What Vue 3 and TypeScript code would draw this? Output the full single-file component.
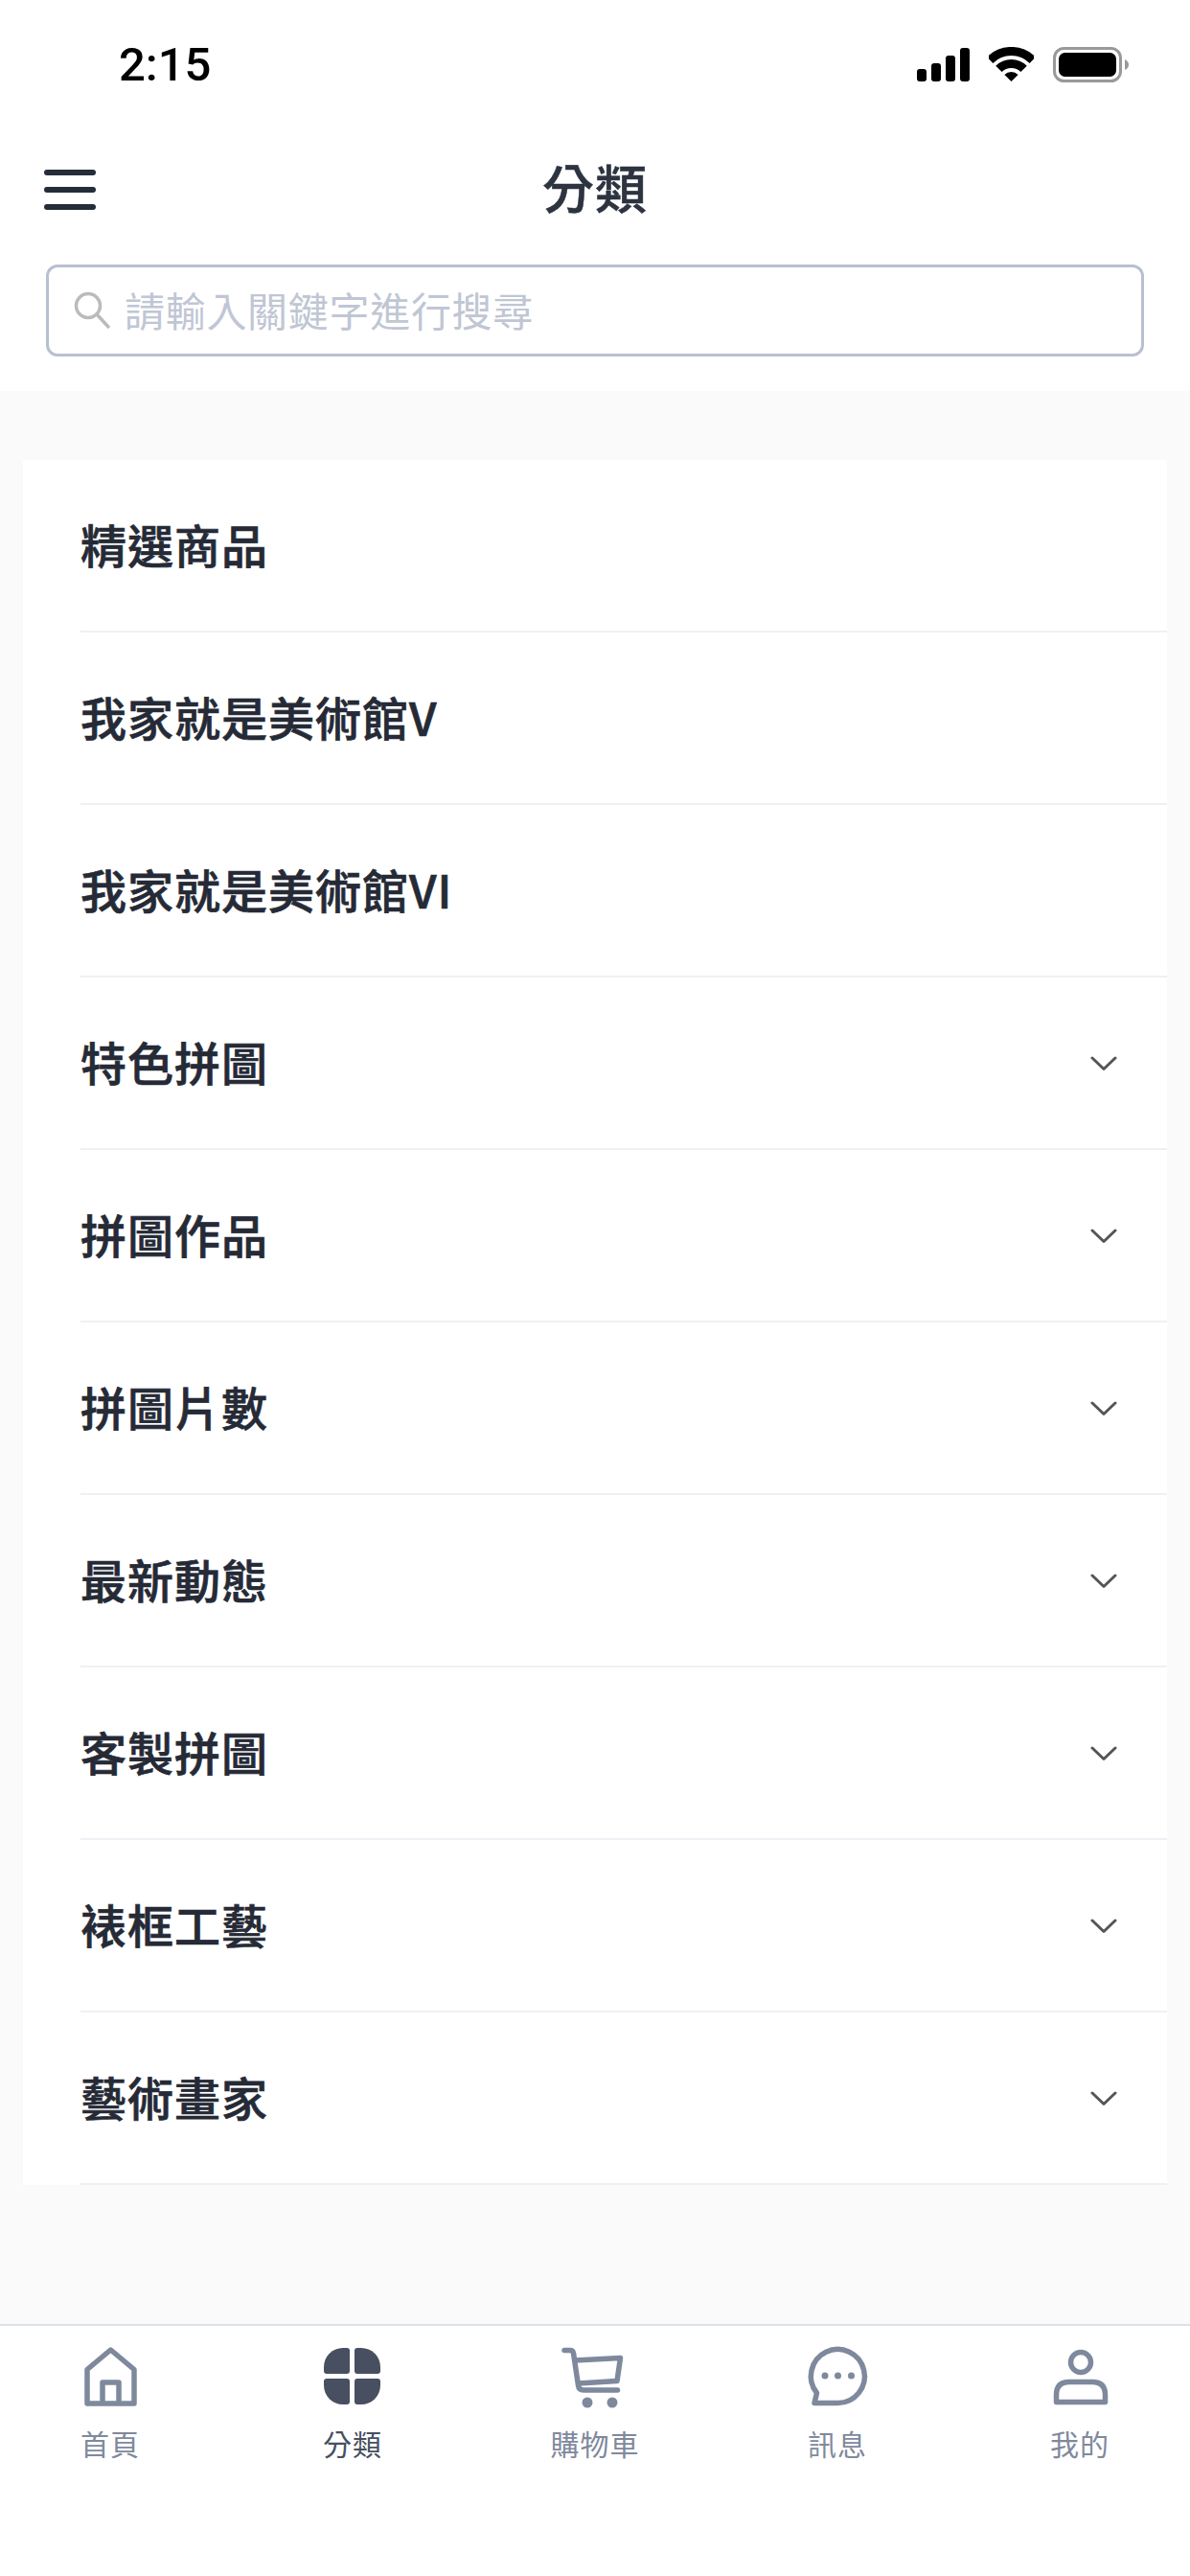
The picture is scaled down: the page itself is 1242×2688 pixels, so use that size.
<script setup lang="ts">
const categories = [
  { name: '精選商品', more: false },
  { name: '我家就是美術館V', more: false },
  { name: '我家就是美術館VI', more: false },
  { name: '特色拼圖', more: true },
  { name: '拼圖作品', more: true },
  { name: '拼圖片數', more: true },
  { name: '最新動態', more: true },
  { name: '客製拼圖', more: true },
  { name: '裱框工藝', more: true },
  { name: '藝術畫家', more: true },
]
</script>

<template>
  <div class="page">
    <div class="status">
      <span class="time">2:15</span>
      <div class="status-icons">
        <svg width="55" height="35" viewBox="0 0 55 35" class="signal">
          <rect x="0" y="22" width="10" height="13" rx="3" />
          <rect x="15" y="16" width="10" height="19" rx="3" />
          <rect x="30" y="8" width="10" height="27" rx="3" />
          <rect x="45" y="0" width="10" height="35" rx="3" />
        </svg>
        <svg width="47" height="36" viewBox="0 0 47 36" class="wifi">
          <path d="M1.2 13.7A31.5 31.5 0 0 1 45.8 13.7" fill="none" stroke="#000" stroke-width="9" />
          <path d="M10.4 22.9A18.5 18.5 0 0 1 36.6 22.9" fill="none" stroke="#000" stroke-width="9" />
          <path d="M23.5 36L16.4 28.9A10 10 0 0 1 30.6 28.9Z" />
        </svg>
        <svg width="79" height="37" viewBox="0 0 79 37" class="battery">
          <rect x="1.5" y="1.5" width="69" height="34" rx="10" fill="none" stroke="#999" stroke-width="3" />
          <rect x="6" y="6" width="60" height="25" rx="6.5" />
          <path d="M75 13Q79 15 79 18.5Q79 22 75 24Z" fill="#999" />
        </svg>
      </div>
    </div>

    <header class="nav">
      <button class="menu" aria-label="menu">
        <span></span>
        <span></span>
        <span></span>
      </button>
      <h1 class="title">分類</h1>
    </header>

    <div class="search-wrap">
      <div class="search">
        <svg width="40" height="40" viewBox="0 0 40 40" fill="none" stroke="#bbb" stroke-width="3.5">
          <circle cx="15" cy="15" r="12.5" />
          <path d="M24 24L36 37" stroke-linecap="round" />
        </svg>
        <span class="placeholder">請輸入關鍵字進行搜尋</span>
      </div>
    </div>

    <main class="content">
      <ul class="list">
        <li v-for="cat in categories" :key="cat.name" class="row">
          <span class="row-name">{{ cat.name }}</span>
          <svg v-if="cat.more" class="chevron" width="28" height="16" viewBox="0 0 28 16" fill="none">
            <path d="M2 2L14 13.5L26 2" stroke="#555" stroke-width="3" stroke-linecap="round" stroke-linejoin="round" />
          </svg>
        </li>
      </ul>
    </main>

    <nav class="tabs">
      <div class="tab">
        <svg width="70" height="70" viewBox="0 0 70 70" fill="none" stroke="#7f899d" stroke-width="5.5" stroke-linejoin="round">
          <path d="M11 27.5L35.5 7L60 27.5V63H11Z" />
          <path d="M27 63V41H44V63" />
        </svg>
        <span>首頁</span>
      </div>
      <div class="tab active">
        <svg width="70" height="70" viewBox="0 0 70 70" fill="#474f60">
          <path d="M29 5Q32 5 32 8V29Q32 32 29 32H8Q5 32 5 29V25A20 20 0 0 1 25 5Z" />
          <path d="M29 5Q32 5 32 8V29Q32 32 29 32H8Q5 32 5 29V25A20 20 0 0 1 25 5Z" transform="matrix(-1 0 0 1 69 0)" />
          <path d="M29 5Q32 5 32 8V29Q32 32 29 32H8Q5 32 5 29V25A20 20 0 0 1 25 5Z" transform="matrix(1 0 0 -1 0 69)" />
          <path d="M29 5Q32 5 32 8V29Q32 32 29 32H8Q5 32 5 29V25A20 20 0 0 1 25 5Z" transform="matrix(-1 0 0 -1 69 69)" />
        </svg>
        <span>分類</span>
      </div>
      <div class="tab">
        <svg width="70" height="70" viewBox="0 0 70 70" fill="none" stroke="#7f899d" stroke-width="5.5" stroke-linejoin="round" stroke-linecap="round">
          <path d="M3 7.5H9Q12 7.5 12.5 10.5L17.5 44Q18 49 23 49H58.5" />
          <path d="M14 18L61.5 15.5L58 39.5L18 42" />
          <circle cx="27" cy="62" r="5.5" fill="#7f899d" stroke="none" />
          <circle cx="53" cy="62" r="5.5" fill="#7f899d" stroke="none" />
        </svg>
        <span>購物車</span>
      </div>
      <div class="tab">
        <svg width="70" height="70" viewBox="0 0 70 70" fill="none" stroke="#7f899d" stroke-width="5.5" stroke-linejoin="round">
          <path d="M35.5 62.5H11L13.5 52A28 28 0 1 1 35.5 62.5Z" />
          <circle cx="22" cy="34" r="3.5" fill="#7f899d" stroke="none" />
          <circle cx="35.5" cy="34" r="3.5" fill="#7f899d" stroke="none" />
          <circle cx="49.5" cy="34" r="3.5" fill="#7f899d" stroke="none" />
        </svg>
        <span>訊息</span>
      </div>
      <div class="tab">
        <svg width="70" height="70" viewBox="0 0 70 70" fill="none" stroke="#7f899d" stroke-width="5.5" stroke-linejoin="round">
          <circle cx="36" cy="20" r="10.5" />
          <path d="M10.5 61.5V54Q10.5 40.5 24 40.5H48Q61.5 40.5 61.5 54V61.5Z" />
        </svg>
        <span>我的</span>
      </div>
    </nav>
  </div>
</template>

<style>
body {
  margin: 0;
  background: #fff;
}
</style>

<style scoped>
.page {
  width: 1242px;
  height: 2688px;
  display: flex;
  flex-direction: column;
  font-family: 'Noto Sans CJK TC', 'Noto Sans', sans-serif;
  letter-spacing: 1px;
  background: #fff;
  overflow: hidden;
}

.status {
  height: 136px;
  box-sizing: border-box;
  padding: 49px 64px 0 124px;
  display: flex;
  justify-content: space-between;
  align-items: flex-start;
}

.time {
  font-family: Roboto, sans-serif;
  font-size: 49px;
  font-weight: 500;
  line-height: 37px;
  letter-spacing: 0;
  color: #000;
}

.status-icons {
  display: flex;
  align-items: flex-start;
}

.signal {
  margin-top: 1px;
}

.wifi {
  margin-left: 20px;
}

.battery {
  margin-left: 20px;
}

.nav {
  height: 122px;
  position: relative;
  display: flex;
  align-items: center;
  justify-content: center;
}

.menu {
  position: absolute;
  left: 46px;
  top: 41px;
  width: 54px;
  display: flex;
  flex-direction: column;
  gap: 12px;
  padding: 0;
  border: 0;
  background: none;
}

.menu span {
  display: block;
  height: 6px;
  border-radius: 3px;
  background: #252d3a;
}

.title {
  margin: 0 0 6px;
  font-size: 54px;
  font-weight: 500;
  -webkit-text-stroke: 0.5px #2d3440;
  color: #2d3440;
}

.search-wrap {
  padding: 18px 48px 36px;
}

.search {
  height: 96px;
  box-sizing: border-box;
  border: 3px solid #b8c0d0;
  border-radius: 12px;
  background: #fff;
  display: flex;
  align-items: center;
  padding-left: 26px;
  gap: 13px;
}

.placeholder {
  margin-bottom: 2px;
  font-size: 42px;
  line-height: 60px;
  letter-spacing: 0.7px;
  color: #c0c6d4;
}

.content {
  flex: 1;
  background: #fafafa;
  padding: 72px 24px 0;
}

.list {
  margin: 0;
  padding: 0 0 0 60px;
  list-style: none;
  background: #fff;
}

.row {
  height: 180px;
  box-sizing: border-box;
  border-bottom: 2px solid #eef0f5;
  display: flex;
  align-items: center;
  justify-content: space-between;
  padding-right: 52px;
}

.row-name {
  margin-bottom: 5px;
  font-size: 48px;
  font-weight: 500;
  -webkit-text-stroke: 0.7px #252a36;
  color: #252a36;
}

.chevron {
  margin-top: 2px;
}

.tabs {
  height: 263px;
  box-sizing: border-box;
  border-top: 2px solid #dde2ea;
  background: #fff;
  padding: 18px 65px 0;
  display: flex;
  justify-content: space-between;
  align-items: flex-start;
}

.tab {
  width: 100px;
  display: flex;
  flex-direction: column;
  align-items: center;
  font-size: 30px;
  line-height: 40px;
  color: #7f899d;
  white-space: nowrap;
}

.tab span {
  margin-top: 14px;
}

.tab.active {
  color: #474f60;
}
</style>
